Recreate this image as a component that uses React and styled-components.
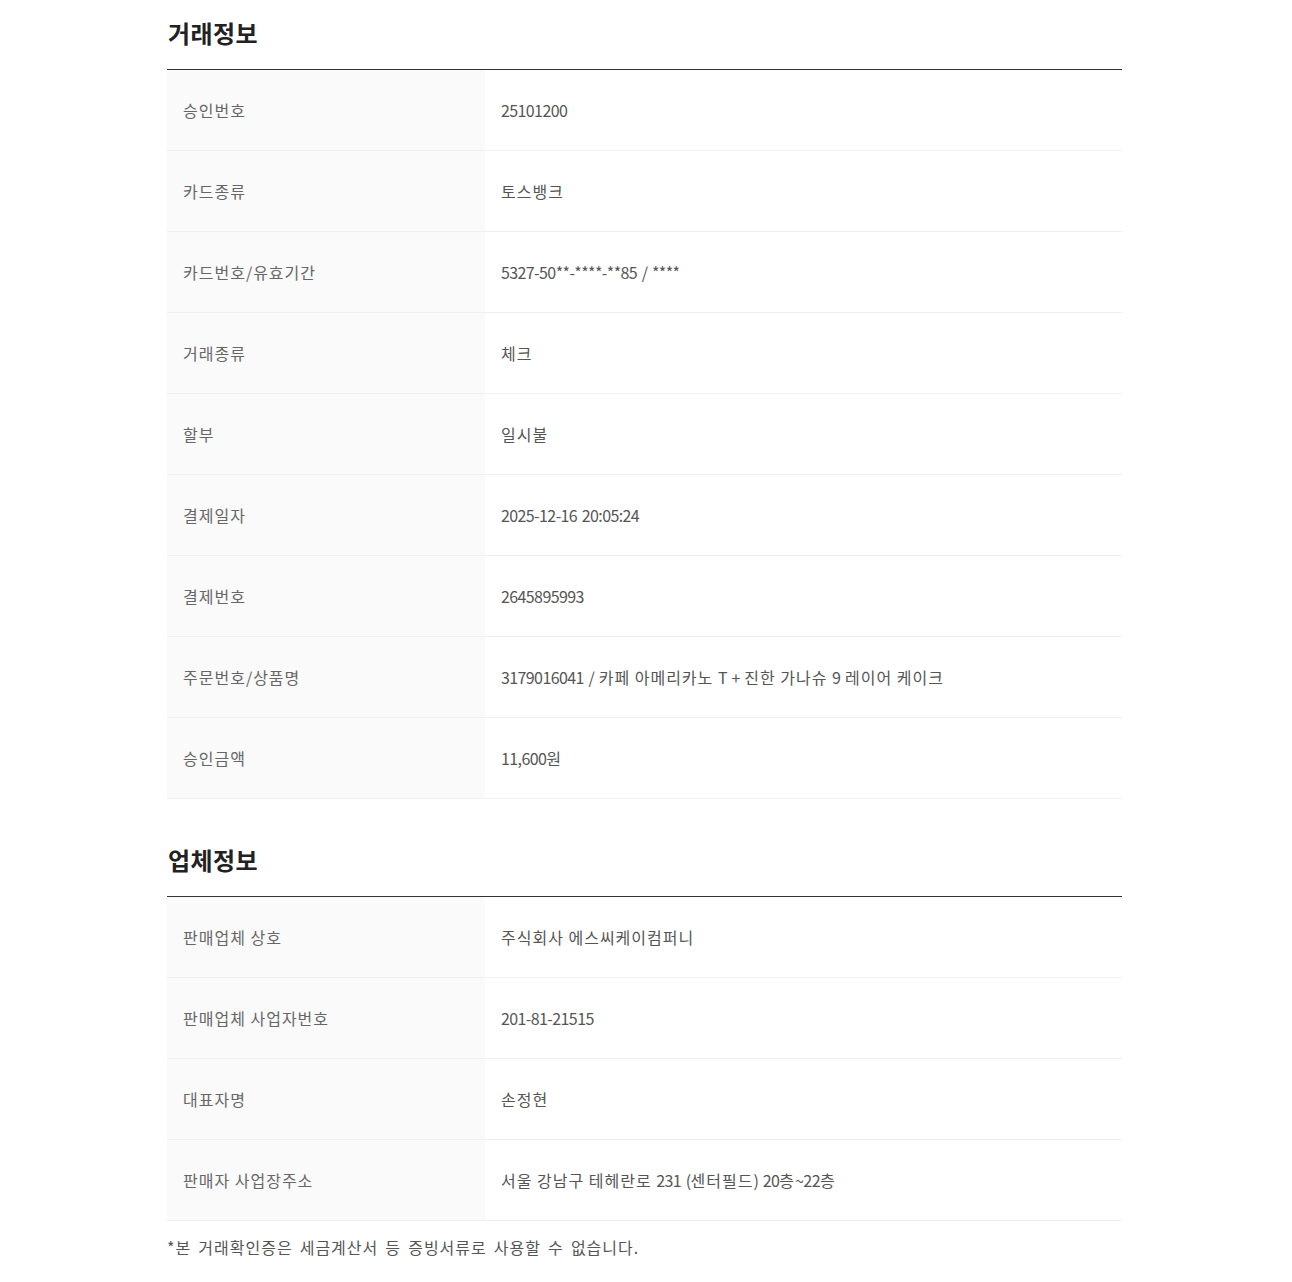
import React from "react";
import styled, { createGlobalStyle } from "styled-components";

const GlobalStyle = createGlobalStyle`
  body {
    margin: 0;
    background: #fff;
    font-family: "Noto Sans CJK KR", "Noto Sans", sans-serif;
  }
`;

/* ---------- PAGE LAYOUT ---------- */
const Page = styled.div`
  width: 955px;
  margin: 0 auto 0 167px;
  padding-bottom: 20px;
`;

const Section = styled.section`
  & + & {
    margin-top: 28px;
  }
`;

const Heading = styled.h2`
  margin: 0;
  padding: 18px 0 21px 1px;
  font-size: 24px;
  line-height: 30px;
  font-weight: 700;
  color: #222;
  letter-spacing: 0.4px;
  border-bottom: 1px solid #333;
`;

/* ---------- TABLE ---------- */
const Table = styled.dl`
  margin: 0;
`;

const Row = styled.div`
  display: grid;
  grid-template-columns: 318px 1fr;
  height: 80px;
  border-bottom: 1px solid #f0f0f0;
`;

const Label = styled.dt`
  display: flex;
  align-items: center;
  padding: 0 16px;
  background: #fafafa;
  font-size: 16px;
  color: #666;
  letter-spacing: 1px;
`;

const Value = styled.dd`
  display: flex;
  align-items: center;
  margin: 0;
  padding: 0 16px;
  font-size: 16px;
  color: #555;
  letter-spacing: 1px;
  white-space: pre;
`;

// digits and latin runs are set tighter than hangul
const Num = styled.span`
  letter-spacing: -0.6px;
`;

const Note = styled.p`
  margin: 14px 0 0;
  font-size: 16px;
  color: #555;
  letter-spacing: 1px;
  word-spacing: 2.5px;
`;

const trade = [
  ["승인번호", "25101200"],
  ["카드종류", "토스뱅크"],
  ["카드번호/유효기간", "5327-50**-****-**85 / ****"],
  ["거래종류", "체크"],
  ["할부", "일시불"],
  ["결제일자", "2025-12-16 20:05:24"],
  ["결제번호", "2645895993"],
  ["주문번호/상품명", "3179016041 / 카페 아메리카노 T + 진한 가나슈 9 레이어 케이크"],
  ["승인금액", "11,600원"],
];

const seller = [
  ["판매업체 상호", "주식회사 에스씨케이컴퍼니"],
  ["판매업체 사업자번호", "201-81-21515"],
  ["대표자명", "손정현"],
  ["판매자 사업장주소", "서울 강남구 테헤란로 231 (센터필드) 20층~22층"],
];

function Mixed({ text }) {
  return text
    .split(/([^\uAC00-\uD7A3 ]+)/)
    .filter(Boolean)
    .map((part, i) =>
      /[\uAC00-\uD7A3 ]/.test(part[0]) ? part : <Num key={i}>{part}</Num>
    );
}

function InfoTable({ title, rows }) {
  return (
    <Section>
      <Heading>{title}</Heading>
      <Table>
        {rows.map(([k, v]) => (
          <Row key={k}>
            <Label>{k}</Label>
            <Value>
              <span>
                <Mixed text={v} />
              </span>
            </Value>
          </Row>
        ))}
      </Table>
    </Section>
  );
}

export default function App() {
  return (
    <>
      <GlobalStyle />
      <Page>
        <InfoTable title="거래정보" rows={trade} />
        <InfoTable title="업체정보" rows={seller} />
        <Note>*본 거래확인증은 세금계산서 등 증빙서류로 사용할 수 없습니다.</Note>
      </Page>
    </>
  );
}
